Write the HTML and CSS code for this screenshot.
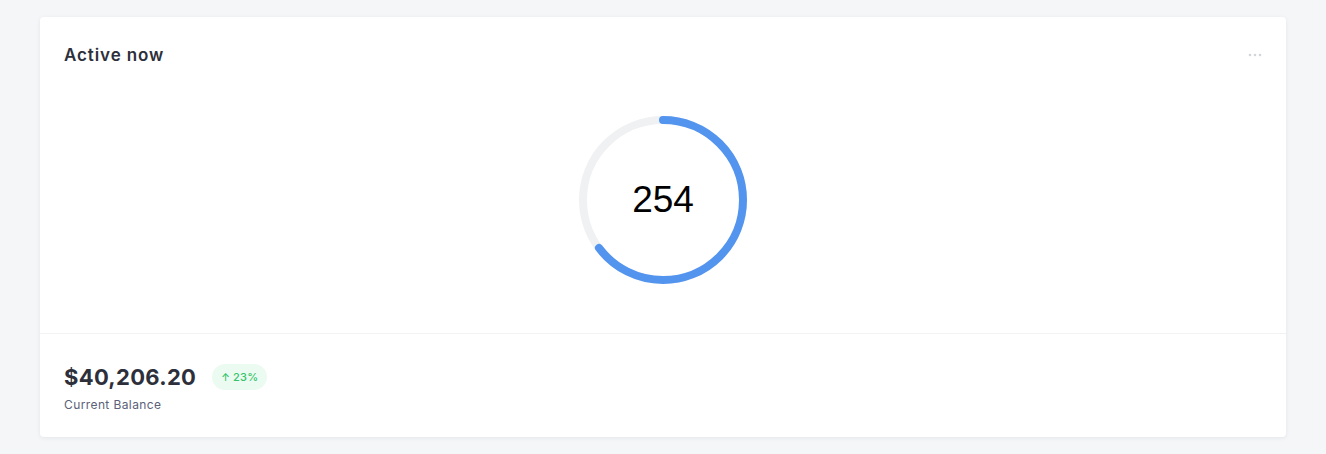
FILE: index.html
```html
<!DOCTYPE html>
<html>
<head>
<meta charset="utf-8">
<link rel="stylesheet" href="styles.css">
</head>
<body>
<div class="page">
  <section class="card">
    <div class="card-top">
      <div class="card-header">
        <h2 class="title">Active now</h2>
        <button class="more" aria-label="More">
          <svg width="14" height="4" viewBox="0 0 14 4"><circle cx="2" cy="2" r="1.3" fill="#d3d5da"/><circle cx="7" cy="2" r="1.3" fill="#d3d5da"/><circle cx="12" cy="2" r="1.3" fill="#d3d5da"/></svg>
        </button>
      </div>
      <div class="chart">
        <div class="ring">
          <svg width="176" height="176" viewBox="0 0 176 176">
            <circle cx="88" cy="88" r="80" fill="none" stroke="#f0f1f2" stroke-width="8"/>
            <circle cx="88" cy="88" r="80" fill="none" stroke="#5394ef" stroke-width="8" stroke-linecap="round" stroke-dasharray="325 503" transform="rotate(-90 88 88)"/>
          </svg>
          <span class="ring-value">254</span>
        </div>
      </div>
    </div>
    <div class="card-footer">
      <div class="balance-row">
        <span class="amount">$40,206.20</span>
        <span class="badge"><span class="arrow">&#8593;</span> 23%</span>
      </div>
      <div class="label">Current Balance</div>
    </div>
  </section>
</div>
</body>
</html>
```

FILE: styles.css
```css
* { box-sizing: border-box; }
html, body { margin: 0; padding: 0; }
body {
  background: #f5f6f8;
  font-family: "Inter", "Open Sans", sans-serif;
  width: 1326px;
  height: 454px;
  overflow: hidden;
}
.page {
  padding: 17px 40px 0 40px;
}
.card {
  background: #fff;
  border-radius: 4px;
  box-shadow: 0 1px 4px rgba(30, 40, 60, 0.08);
  height: 420px;
  display: flex;
  flex-direction: column;
}
.card-top {
  height: 317px;
  border-bottom: 1px solid #f1f2f4;
  padding: 27px 24px 0 24px;
}
.card-header {
  display: flex;
  justify-content: space-between;
  align-items: center;
  height: 22px;
}
.title {
  margin: 0;
  font-size: 17px;
  font-weight: 600;
  color: #2d303b;
  letter-spacing: 0.9px;
}
.more {
  border: 0;
  background: none;
  padding: 0;
  display: flex;
  width: 14px;
  height: 4px;
}
.chart {
  display: flex;
  justify-content: center;
  padding-top: 46px;
}
.ring {
  position: relative;
  width: 176px;
  height: 176px;
}
.ring svg { display: block; }
.ring-value {
  position: absolute;
  inset: 0;
  display: flex;
  align-items: center;
  justify-content: center;
  font-family: "Liberation Sans", Arial, sans-serif;
  font-size: 37px;
  color: #000;
}
.card-footer {
  padding: 30px 24px 0 24px;
}
.balance-row {
  display: flex;
  align-items: center;
  gap: 16px;
}
.amount {
  font-size: 22px;
  font-weight: 700;
  color: #2d303b;
  letter-spacing: 0.3px;
}
.badge {
  background: #ecfbf1;
  color: #34c36b;
  font-size: 11px;
  font-weight: 500;
  border-radius: 13px;
  padding: 5px 9px;
  line-height: 16px;
  letter-spacing: 0.2px;
}
.arrow { font-size: 10px; }
.label {
  margin-top: 7px;
  font-size: 12px;
  color: #5b6178;
  letter-spacing: 0.4px;
}
```
